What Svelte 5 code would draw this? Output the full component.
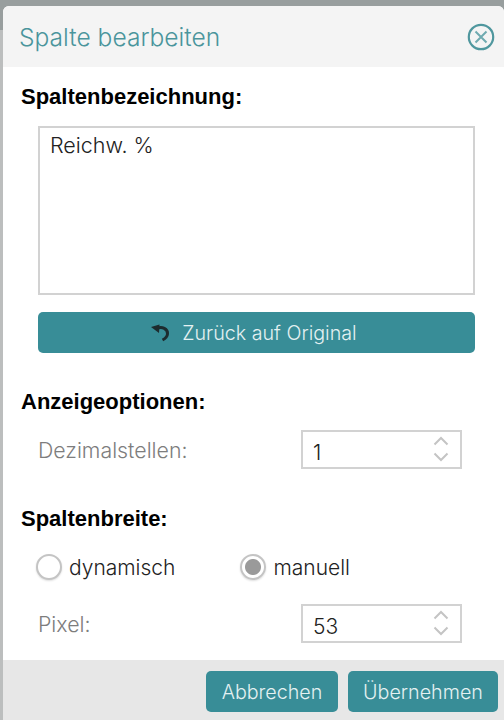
<script>
  let name = $state('Reichw. %');
  let mode = $state('manuell');
</script>

<div class="page">
  <div class="dialog">
    <header class="head">
      <h1>Spalte bearbeiten</h1>
      <svg class="close" width="28" height="28" viewBox="0 0 28 28" aria-label="Schließen">
        <circle cx="14" cy="14" r="12.2" fill="none" stroke="#4f979e" stroke-width="2.2"/>
        <path d="M8.5 8.5 19.5 19.5M19.5 8.5 8.5 19.5" stroke="#6faab0" stroke-width="2"/>
      </svg>
    </header>

    <main class="body">
      <h2 class="first">Spaltenbezeichnung:</h2>
      <div class="indent">
        <textarea class="names" bind:value={name}></textarea>
        <button class="btn wide">
          <svg width="22" height="20" viewBox="0 0 22 20">
            <path d="M8 5.500C13 3 19 6 18.500 11c-.2 2.600-2 4.500-5 6" fill="none" stroke="#1d2b2e" stroke-width="3"/>
            <path d="M2 4 10.500 1.500 10 10Z" fill="#1d2b2e"/>
          </svg>
          Zurück auf Original
        </button>
      </div>

      <h2 class="options">Anzeigeoptionen:</h2>
      <div class="row">
        <span class="lbl">Dezimalstellen:</span>
        <div class="spin">
          <span>1</span>
          <svg width="16" height="26" viewBox="0 0 16 26"><path d="M1.500 8.500 8 2l6.500 6.500M1.500 17.500 8 24l6.500-6.500" fill="none" stroke="#c4c4c4" stroke-width="2"/></svg>
        </div>
      </div>

      <h2 class="width">Spaltenbreite:</h2>
      <div class="radios">
        <label class="radio"><input type="radio" bind:group={mode} value="dynamisch"/><i class="dot"></i>dynamisch</label>
        <label class="radio"><input type="radio" bind:group={mode} value="manuell"/><i class="dot"></i>manuell</label>
      </div>
      <div class="row pixel">
        <span class="lbl">Pixel:</span>
        <div class="spin">
          <span>53</span>
          <svg width="16" height="26" viewBox="0 0 16 26"><path d="M1.500 8.500 8 2l6.500 6.500M1.500 17.500 8 24l6.500-6.500" fill="none" stroke="#c4c4c4" stroke-width="2"/></svg>
        </div>
      </div>
    </main>

    <footer class="foot">
      <button class="btn">Abbrechen</button>
      <button class="btn">Übernehmen</button>
    </footer>
  </div>
</div>

<style>
  :global(body) { margin: 0; background: #fff; }
  .page {
    width: 504px; height: 720px; overflow: hidden; box-sizing: border-box;
    padding: 6px 0 0 3px;
    background: linear-gradient(#989e9e 0 30px, #bcbebe 30px);
    font-family: Inter, "Liberation Sans", Arial, sans-serif; font-weight: 300; color: #222;
  }
  .dialog {
    height: 714px; background: #fff; border-radius: 6px 6px 0 0; overflow: hidden;
    display: flex; flex-direction: column;
  }
  .head {
    height: 61px; flex: none; background: #f4f4f4; display: flex; align-items: center;
    justify-content: space-between; padding: 0 9px 0 16px;
  }
  h1 { margin: 0; font-size: 24.600px; font-weight: 300; color: #4a959c; }
  .body { flex: 1; padding: 0 42px 0 18px; }
  h2 { margin: 0; line-height: 24px; font-family: "Liberation Sans", Arial, sans-serif; font-size: 22px; font-weight: 700; color: #000; }
  .first { margin-top: 18px; }
  .indent { margin-left: 17px; }
  .names {
    display: block; box-sizing: border-box; width: 437px; height: 169px; margin-top: 17px;
    border: 2px solid #d2d2d2; padding: 5px 10px; resize: none; outline: none;
    font: 300 21.500px/24px Inter, "Liberation Sans", Arial, sans-serif; color: #222;
  }
  .btn {
    display: flex; align-items: center; justify-content: center; gap: 11px;
    height: 41px; padding: 0; border: 0; border-radius: 5px; background: #388d97;
    color: #e4f1f2; font: 300 19.700px Inter, "Liberation Sans", Arial, sans-serif;
  }
  .wide { width: 437px; margin-top: 17px; padding-right: 7px; }
  .options { margin-top: 37px; }
  .row { display: flex; align-items: center; justify-content: space-between; margin-top: 16px; padding-left: 17px; }
  .lbl { font-size: 21.300px; color: #7d7d7d; }
  .spin {
    box-sizing: border-box; width: 161px; height: 39px; border: 2px solid #d2d2d2;
    display: flex; align-items: center; justify-content: space-between; padding: 0 11px 0 10px;
    font-size: 21px; color: #222;
  }
  .spin span { margin-top: 6px; }
  .spin svg { margin-top: -1px; }
  .width { margin-top: 38px; }
  .radios { display: flex; gap: 65px; margin-top: 23px; padding-left: 15px; }
  .radio { display: flex; align-items: center; gap: 7px; font-size: 21px; color: #222; }
  .radio input { position: absolute; opacity: 0; width: 0; height: 0; }
  .dot {
    box-sizing: border-box; width: 26px; height: 26px; border-radius: 50%;
    border: 2px solid #c4c4c4; background: #fff; box-shadow: 0 1px 2px #0002;
  }
  .radio input:checked + .dot { background: radial-gradient(circle, #9a9a9a 0 7.500px, #fff 8.500px); }
  .pixel { margin-top: 24px; }
  .foot {
    height: 60px; flex: none; background: #e7e7e7; display: flex; justify-content: flex-end;
    gap: 10px; padding: 11px 6px 0 0; box-sizing: border-box;
  }
  .foot .btn { width: 132px; }
  .foot .btn:last-child { width: 150px; }
</style>
